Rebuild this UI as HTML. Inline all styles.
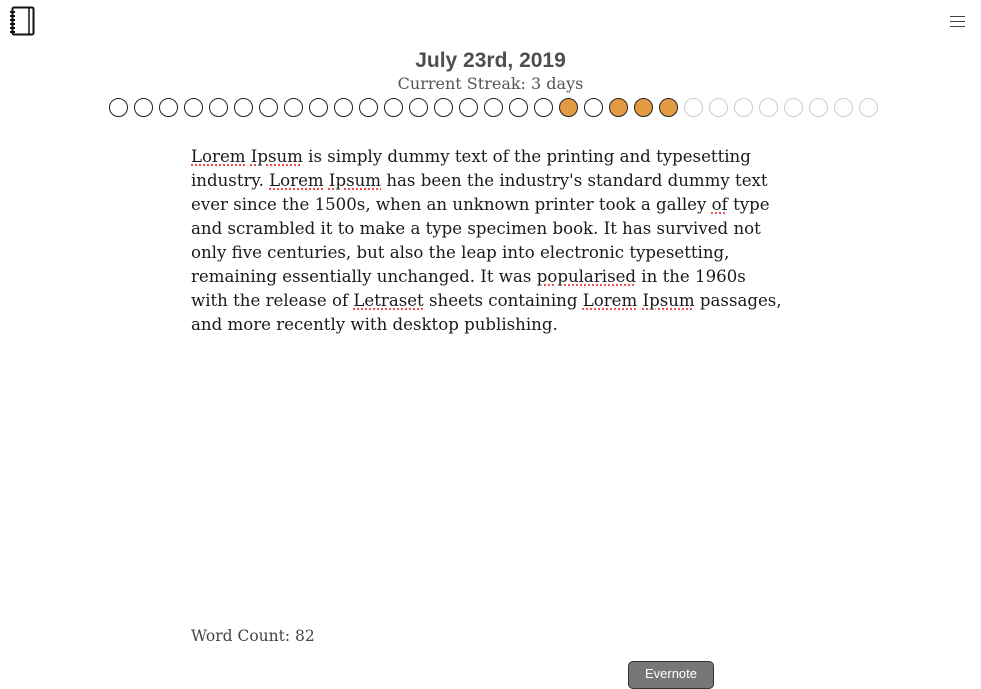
<!DOCTYPE html>
<html><head><style>
body{margin:0;width:981px;height:679px;background:#fff;position:relative;overflow:hidden;font-family:"Liberation Sans",sans-serif}
.t{position:absolute;left:0;width:981px;text-align:center}
#d{top:49px;font-size:21px;font-weight:bold;color:#4a4f52}
#s{top:74px;color:#555;font-family:"DejaVu Serif",serif;font-size:16px}
.c{position:absolute;top:98px;width:17px;height:17px;border:1px solid #222;border-radius:50%;box-sizing:content-box}
.f{background:#e39a43}
.g{border-color:#ccc}
#p{position:absolute;left:191px;top:145px;font-family:"DejaVu Serif",serif;font-size:16.6px;line-height:24px;color:#1a1a1a;white-space:nowrap}
.u{text-decoration:underline dotted #e33;text-underline-offset:3px}
#w{position:absolute;left:191px;top:627px;font-family:"DejaVu Serif",serif;font-size:15.5px;color:#444}
#b{position:absolute;left:628px;top:661px;width:84px;height:26px;background:#777;border:1px solid #333;border-radius:5px;color:#fff;font-size:13px;text-align:center;line-height:24px}
.h{position:absolute;left:950px;width:15px;height:1px;background:#444}
</style></head><body>
<svg style="position:absolute;left:9px;top:6px" width="28" height="30" viewBox="0 0 28 30">
<rect x="3.5" y="1.5" width="21" height="27" rx="1.5" fill="none" stroke="#111" stroke-width="2"/>
<line x1="20" y1="2" x2="20" y2="28" stroke="#111" stroke-width="1.5"/>
<g stroke="#111" stroke-width="2"><line x1="1" y1="6" x2="6" y2="6"/><line x1="1" y1="10" x2="6" y2="10"/><line x1="1" y1="14" x2="6" y2="14"/><line x1="1" y1="18" x2="6" y2="18"/><line x1="1" y1="22" x2="6" y2="22"/><line x1="1" y1="26" x2="6" y2="26"/></g>
</svg>
<div class="h" style="top:16px"></div><div class="h" style="top:21px"></div><div class="h" style="top:26px"></div>
<div class="t" id="d">July 23rd, 2019</div>
<div class="t" id="s">Current Streak: 3 days</div>
<div id="circ"></div>
<script>
var h='';for(var i=0;i<31;i++){var cl='c';if(i==18||i>=20&&i<=22)cl+=' f';if(i>22)cl+=' g';h+='<div class="'+cl+'" style="left:'+(109+25*i)+'px"></div>';}document.getElementById('circ').innerHTML=h;
</script>
<div id="p"><span class="u">Lorem</span> <span class="u">Ipsum</span> is simply dummy text of the printing and typesetting<br>industry. <span class="u">Lorem</span> <span class="u">Ipsum</span> has been the industry's standard dummy text<br>ever since the 1500s, when an unknown printer took a galley <span class="u">of</span> type<br>and scrambled it to make a type specimen book. It has survived not<br>only five centuries, but also the leap into electronic typesetting,<br>remaining essentially unchanged. It was <span class="u">popularised</span> in the 1960s<br>with the release of <span class="u">Letraset</span> sheets containing <span class="u">Lorem</span> <span class="u">Ipsum</span> passages,<br>and more recently with desktop publishing.</div>
<div id="w">Word Count: 82</div>
<div id="b">Evernote</div>
</body></html>
